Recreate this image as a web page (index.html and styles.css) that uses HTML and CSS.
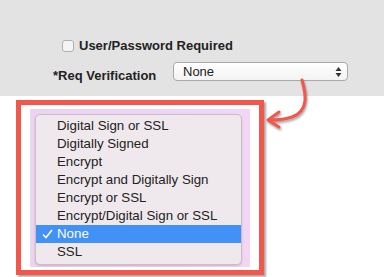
FILE: index.html
```html
<!DOCTYPE html>
<html lang="en">
<head>
    <meta charset="UTF-8">
    <meta name="viewport" content="width=device-width, initial-scale=1.0">
    <title>Req Verification</title>
    <link rel="stylesheet" href="styles.css">
</head>
<body>
    <div class="page">
        <div class="form">
            <div class="row">
                <span class="checkbox"></span>
                <span class="label">User/Password Required</span>
            </div>
            <div class="row verify">
                <span class="label verify-label">*Req Verification</span>
                <div class="select">
                    <span>None</span>
                    <svg class="stepper" width="7" height="12" viewBox="0 0 7 12">
                        <path d="M3.5 1 L6.5 5 L0.5 5 Z M3.5 11 L6.5 7 L0.5 7 Z" fill="#333"/>
                    </svg>
                </div>
            </div>
        </div>
        <div class="below">
            <div class="callout">
                <div class="backdrop">
                    <ul class="menu">
                        <li>Digital Sign or SSL</li>
                        <li>Digitally Signed</li>
                        <li>Encrypt</li>
                        <li>Encrypt and Digitally Sign</li>
                        <li>Encrypt or SSL</li>
                        <li>Encrypt/Digital Sign or SSL</li>
                        <li class="selected">
                            <svg class="check" width="11" height="10" viewBox="0 0 11 10">
                                <path d="M1 5.5 L4 8.5 L10 1" fill="none" stroke="white" stroke-width="1.6"/>
                            </svg>None
                        </li>
                        <li>SSL</li>
                    </ul>
                </div>
            </div>
        </div>
        <svg class="arrow" width="384" height="277" viewBox="0 0 384 277">
            <g fill="none" stroke="#f2574b" stroke-width="3" stroke-linecap="round" stroke-linejoin="round">
                <path d="M302 80 C 306 94, 309 111, 292 117 C 285 119.5, 278 120, 270 120"/>
                <path d="M279 112 L268 120 L279 127"/>
            </g>
        </svg>
    </div>
</body>
</html>
```

FILE: styles.css
```css
body {
    margin: 0;
    font-family: "Liberation Sans", Arial, sans-serif;
    font-size: 13px;
    color: #222;
    background-color: white;
}
.page {
    position: relative;
    width: 384px;
    height: 277px;
    overflow: hidden;
}
.form {
    background-color: #e3e3e3;
    height: 96px;
    padding-top: 37px;
    box-sizing: border-box;
}
.row {
    display: flex;
    align-items: center;
    height: 18px;
    line-height: 18px;
    padding-left: 62px;
}
.checkbox {
    width: 10px;
    height: 10px;
    border: 1px solid #b0b0b0;
    border-radius: 3px;
    background-color: #f4f4f4;
    margin-right: 5px;
}
.label {
    font-weight: bold;
}
.verify {
    margin-top: 7px;
    padding-left: 53px;
    align-items: flex-start;
    height: 19px;
}
.verify-label {
    width: 120px;
    margin-top: 5px;
}
.select {
    width: 164px;
    height: 17px;
    line-height: 17px;
    border: 1px solid #a9a9a9;
    border-radius: 4px;
    background: linear-gradient(#ffffff, #f3f3f3);
    padding-left: 9px;
    display: flex;
    align-items: center;
    justify-content: space-between;
}
.stepper {
    margin-right: 5px;
}
.below {
    padding: 4px 0 0 16px;
}
.callout {
    width: 220px;
    height: 158px;
    border: 5px solid #f2574b;
    background-color: white;
    box-shadow: 2px 2px 2px rgba(0, 0, 0, 0.35);
    padding: 4px 9px 3px 9px;
}
.backdrop {
    height: 158px;
    background: linear-gradient(90deg, #ecd3ee, #f3d6f6);
    padding: 5px 8px 0 5px;
    box-sizing: border-box;
}
.menu {
    list-style: none;
    margin: 0;
    padding: 2px 0 3px 0;
    background-color: #efe9ee;
    border: 1px solid #c6bfc6;
    border-radius: 5px;
    box-shadow: 0 1px 2px rgba(0, 0, 0, 0.15);
}
.menu li {
    height: 18px;
    line-height: 18px;
    padding-left: 21px;
    font-size: 13.3px;
    color: #222;
    position: relative;
}
.menu li.selected {
    background-color: #4291f7;
    color: white;
}
.check {
    position: absolute;
    left: 6px;
    top: 4px;
}
.arrow {
    position: absolute;
    left: 0;
    top: 0;
    pointer-events: none;
    filter: drop-shadow(1px 2px 1px rgba(0, 0, 0, 0.35));
}
```
